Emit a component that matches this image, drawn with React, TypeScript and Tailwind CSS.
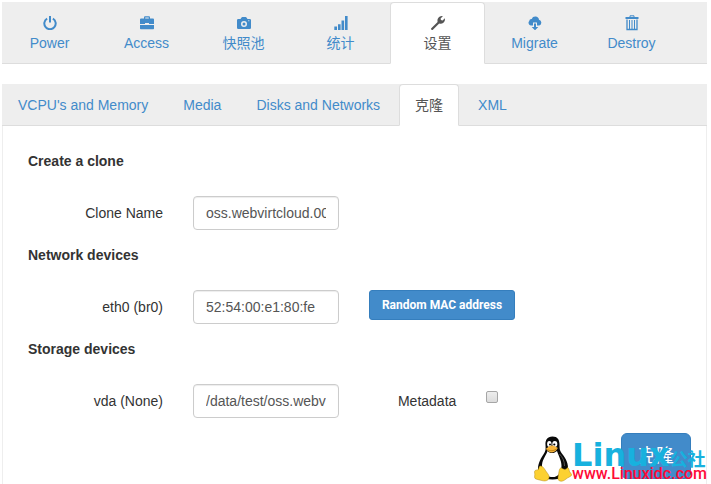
import { useState } from 'react';
import type { ReactNode } from 'react';

const PowerIcon = () => (
  <svg viewBox="0 0 14 14" className="size-3.5" fill="none" stroke="currentColor" strokeWidth="2" aria-hidden="true">
    <path d="M4.1 2.6a5.7 5.7 0 1 0 5.8 0" />
    <path d="M7 0v6.6" />
  </svg>
);

const BriefcaseIcon = () => (
  <svg viewBox="0 0 14 14" className="size-3.5" fill="currentColor" aria-hidden="true">
    <path fillRule="evenodd" d="M4 2.500V1.500Q4 .3 5 .3h4q1 0 1 1.200v1h3q1 0 1 1V8H9V7H5v1H0V3.500q0-1 1-1zm1.200 0h3.600V1.600H5.200z" />
    <path d="M0 9h14v3.500q0 .7-.7.7H.7q-.7 0-.7-.7z" />
  </svg>
);

const CameraIcon = () => (
  <svg viewBox="0 0 14 14" className="size-3.5" fill="currentColor" aria-hidden="true">
    <path
      fillRule="evenodd"
      d="M1.200 3h2.300l1-1.600Q4.800 1 5.300 1h3.400q.5 0 .8.4l1 1.600h2.300Q14 3 14 4.200v7.600Q14 13 12.800 13H1.200Q0 13 0 11.800V4.200Q0 3 1.200 3zM7 5a3 3 0 1 0 0 6 3 3 0 0 0 0-6zm4.300-.8v1h1v-1z"
    />
    <circle cx="7" cy="8" r="1.500" />
  </svg>
);

const SignalIcon = () => (
  <svg viewBox="0 0 14 14" className="size-3.5" fill="currentColor" aria-hidden="true">
    <path d="M.3 10.500H3V14H.3zM4 8.200h2.600V14H4zM7.500 4.500h2.600V14H7.500zM11 0h2.600v14H11z" />
  </svg>
);

const WrenchIcon = () => (
  <svg viewBox="0 0 14 14" className="size-3.5" fill="currentColor" aria-hidden="true">
    <path d="M.3 12.200 6.600 5.900C6 3.900 7 1.500 8.900.6c.9-.5 2-.7 2.900-.4L9.600 2.400l.3 1.700 1.700.3 2.200-2.100c.4 1.600-.1 3.300-1.400 4.400-1.100 1-2.800 1.300-4.200.8l-6.300 6.200c-.4.4-1 .4-1.400 0l-.2-.2c-.4-.4-.4-.9 0-1.300z" />
  </svg>
);

const CloudDownloadIcon = () => (
  <svg viewBox="0 0 14 14" className="size-3.5" fill="currentColor" aria-hidden="true">
    <path d="M2.900 9.500A2.700 2.700 0 0 1 1.200 5 2.300 2.300 0 0 1 3.700 3a3.800 3.800 0 0 1 7.300.700A3 3 0 0 1 11.200 9.500H9V6.500H5v3z" />
    <path d="M6 7.500h2V11h2.300L7 14.300 3.700 11H6z" />
  </svg>
);

const TrashIcon = () => (
  <svg viewBox="0 0 14 16" className="h-4 w-3.5" fill="none" stroke="currentColor" aria-hidden="true">
    <path d="M5 2V.8h4V2" />
    <path d="M.5 3h13" strokeWidth="2" />
    <path d="M2 4.500V14.500h10V4.500" strokeWidth="1.300" />
    <path d="M4.500 5v9.500M7 5v9.500M9.500 5v9.500" />
  </svg>
);

const actions: { label: string; icon: ReactNode; active?: boolean }[] = [
  { label: 'Power', icon: <PowerIcon /> },
  { label: 'Access', icon: <BriefcaseIcon /> },
  { label: '快照池', icon: <CameraIcon /> },
  { label: '统计', icon: <SignalIcon /> },
  { label: '设置', icon: <WrenchIcon />, active: true },
  { label: 'Migrate', icon: <CloudDownloadIcon /> },
  { label: 'Destroy', icon: <TrashIcon /> },
];

const settings = ["VCPU's and Memory", 'Media', 'Disks and Networks', '克隆', 'XML'];

const tabIdle = 'border-transparent text-[#428bca]';
const tabActive = 'border-[#ddd] border-b-white bg-white text-[#555]';

const TextField = ({ id, value }: { id: string; value: string }) => (
  <div className="col-span-3 px-[15px]">
    <input
      id={id}
      type="text"
      defaultValue={value}
      className="block h-[34px] w-full rounded border border-[#ccc] bg-white px-3 py-1.5 text-sm text-[#555] shadow-[inset_0_1px_1px_rgba(0,0,0,0.075)]"
    />
  </div>
);

const FieldLabel = ({ id, children }: { id: string; children: ReactNode }) => (
  <label htmlFor={id} className="col-span-3 px-[15px] pt-[7px] text-right">
    {children}
  </label>
);

const Section = ({ title, children }: { title: string; children: ReactNode }) => (
  <section className="pb-[15px]">
    <h3 className="px-[26px] font-bold">{title}</h3>
    <div className="mt-[25px] grid grid-cols-12 items-start">{children}</div>
  </section>
);

const Penguin = () => (
  <svg viewBox="0 0 38 46" className="h-[46px] w-[38px]" aria-hidden="true">
    <path
      d="M18.500 0.500c-5.500 0-7.300 4-7 8.500.2 4 .4 5.500-1.500 8.500C7 22 4 27 4 33c0 6 5 10.500 14.500 10.500S34 39 34 32c0-6-3.500-11.500-6.500-15-2-2.500-2-5-2-8.500C25.500 3.500 23.500 .5 18.500.5z"
      fill="#080808"
    />
    <path d="M13.500 15c-1 4-5 8-5.500 14-.4 5 2 11 9 12 7 .8 10.500-4 10.500-11 0-6-3-10-4.500-15-2.500 2.500-7 3-9.500 0z" fill="#fff" />
    <path d="M25.500 18c3 3 5 7 5 12" fill="none" stroke="#666" strokeWidth="0.8" />
    <ellipse cx="15.300" cy="8" rx="2.200" ry="2.900" fill="#fff" />
    <ellipse cx="20.800" cy="8" rx="2.500" ry="3" fill="#fff" />
    <circle cx="16" cy="8.500" r="1" />
    <circle cx="20.300" cy="8.500" r="1.100" />
    <path d="M12 12.800c1.500-1.500 4-3.300 6-3.300s4.500 1.500 5.700 2.800c-1 2.200-3.500 4.200-5.700 4.200s-5-1.500-6-3.700z" fill="#f8b63c" />
    <path d="M13.500 13.500c2.500 1.700 6 1.700 9-.6" fill="none" stroke="#a66a00" strokeWidth="0.7" />
    <path
      d="M6.500 30c2.500 0 4 3 6 6 1.500 2 3 3.500 2.500 6-.5 2.500-3.500 3.300-6 2.800-2.500-.7-5-1-7-1.800-2-.7-1.300-2.500-1.200-4.500 0-1.700-.9-3 .4-4 1-.8 2.800-.3 3.300-1.300s.5-3.200 2-3.200z"
      fill="#fcd132"
      stroke="#b48a10"
      strokeWidth="0.5"
    />
    <path
      d="M26 32.500c.8-1.200 2-.2 3.500.6 1.700.9 3.600-.4 4-1.500 1.800.6 1.500 3 2.200 4.400.7 1.200 2.300 1.700 2 3-.4 1.500-3.700 2.300-5.700 4-1.800 1.600-4.500 3-6.700 1.800-2-1.100-1.200-3.800-.8-6 .4-2.300.5-4.700 1.500-6.300z"
      fill="#fcd132"
      stroke="#b48a10"
      strokeWidth="0.5"
    />
  </svg>
);

const SiteMark = () => (
  <div className="pointer-events-none absolute right-0 bottom-0.5 flex items-end">
    <Penguin />
    <div>
      <div className="flex items-baseline text-[#17b1de]">
        <span className="font-['DejaVu_Sans'] text-[32px] leading-3 font-bold">Linux</span>
        <span className="text-lg leading-3 font-bold">公社</span>
      </div>
      <div className="font-['Roboto'] text-base leading-4 font-medium text-[#ff0a37]">www.Linuxidc.com</div>
    </div>
  </div>
);

export default function App() {
  const [tab, setTab] = useState('克隆');

  return (
    <div className="flex min-h-screen flex-col bg-white pt-0.5 pr-1 pl-0.5 font-['Liberation_Sans','Noto_Sans_CJK_SC',sans-serif] text-sm leading-5 text-[#333]">
      {/* Instance actions */}
      <nav className="flex gap-0.5 border-b border-[#ddd] bg-[#eee]">
        {actions.map((item) => (
          <a
            key={item.label}
            href="#"
            className={`-mb-px flex w-[95px] flex-col items-center rounded-t border py-2.5 ${item.active ? tabActive : tabIdle}`}
          >
            <span className="flex h-5 items-center">{item.icon}</span>
            <span className="h-5">{item.label}</span>
          </a>
        ))}
      </nav>

      {/* Settings tabs */}
      <nav className="mt-5 flex gap-[3px] border-b border-[#ddd] bg-[#eee]">
        {settings.map((name) => (
          <button
            key={name}
            type="button"
            onClick={() => setTab(name)}
            className={`-mb-px h-[42px] rounded-t border px-[15px] whitespace-nowrap ${tab === name ? tabActive : tabIdle}`}
          >
            {name}
          </button>
        ))}
      </nav>

      <form className="relative grow pt-[25px] pr-px pb-[5px] shadow-[inset_1px_0_#eee,inset_-1px_0_#eee]" onSubmit={(e) => e.preventDefault()}>
        <Section title="Create a clone">
          <FieldLabel id="name">Clone Name</FieldLabel>
          <TextField id="name" value="oss.webvirtcloud.001" />
        </Section>

        <Section title="Network devices">
          <FieldLabel id="eth0">eth0 (br0)</FieldLabel>
          <TextField id="eth0" value="52:54:00:e1:80:fe" />
          <div className="col-span-3 px-[15px]">
            <button
              type="button"
              className="h-[30px] w-full rounded-[3px] border border-[#357ebd] bg-[#428bca] font-['Roboto'] text-xs font-bold whitespace-nowrap text-white"
            >
              Random MAC address
            </button>
          </div>
        </Section>

        <Section title="Storage devices">
          <FieldLabel id="vda">vda (None)</FieldLabel>
          <TextField id="vda" value="/data/test/oss.webvirtcloud.img" />
          <label htmlFor="meta" className="col-span-2 px-[15px] pt-[7px] text-right">
            Metadata
          </label>
          <div className="col-span-1 px-[15px] pt-[7px]">
            <input
              id="meta"
              type="checkbox"
              className="block size-3 appearance-none rounded-xs border border-[#a6a6a6] bg-linear-to-b from-[#eee] to-[#dcdcdc] checked:bg-[#428bca]"
            />
          </div>
        </Section>

        <div className="flex justify-end px-[15px]">
          <button
            type="submit"
            className="h-[46px] rounded-md border border-[#357ebd] bg-[#428bca] px-4 text-lg text-white"
          >
            克隆
          </button>
        </div>

        <SiteMark />
      </form>
    </div>
  );
}
